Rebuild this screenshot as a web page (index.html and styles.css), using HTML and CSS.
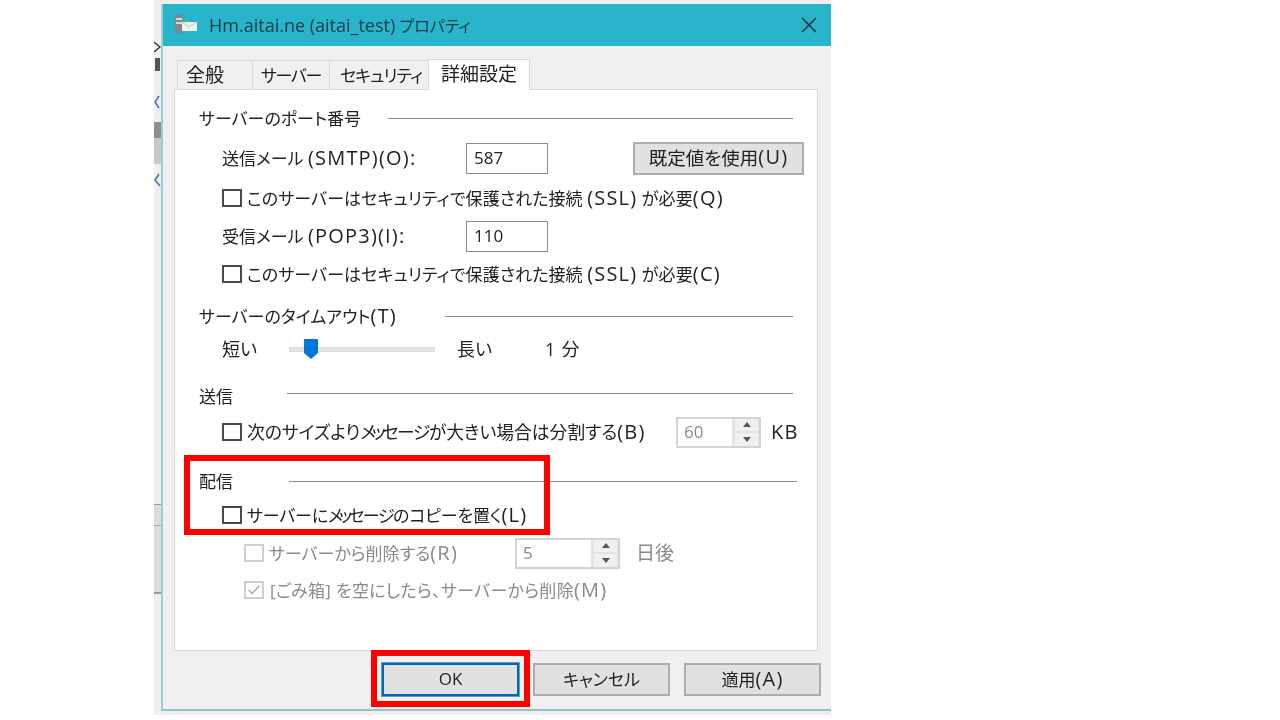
FILE: index.html
```html
<!DOCTYPE html>
<html lang="ja">
<head>
<meta charset="utf-8">
<title>Hm.aitai.ne (aitai_test) プロパティ</title>
<link rel="stylesheet" href="styles.css">
</head>
<body>
<div class="desktop">
  <div class="backdrop">
    <svg class="behind" width="7" height="716" viewBox="0 0 7 716">
      <path d="M0 42 L6 47 L0 52" fill="none" stroke="#333" stroke-width="1.4"/>
      <rect x="1" y="58" width="5" height="13" fill="#555"/>
      <path d="M5 96 L1 102 L5 108" fill="none" stroke="#3a6fc0" stroke-width="1.4"/>
      <rect y="122" width="7" height="16" fill="#8e8e8e"/>
      <rect y="138" width="7" height="26" fill="#c8c8c8"/>
      <path d="M5 174 L1 180 L6 186" fill="none" stroke="#3a6fc0" stroke-width="1.4"/>
      <rect y="504" width="7" height="88" fill="#dcdcdc"/>
      <rect y="504" width="7" height="1" fill="#999"/>
      <rect y="525" width="7" height="1" fill="#aaa"/>
      <rect y="592" width="7" height="2" fill="#999"/>
    </svg>
  </div>
  <div class="dialog">
    <div class="titlebar">
      <svg class="title-icon" width="24" height="22" viewBox="0 0 24 22">
        <rect x="1" y="1" width="8" height="18" fill="#7f8a88"/>
        <rect x="2" y="4" width="6" height="2" fill="#d2d6d4"/>
        <rect x="2" y="8" width="6" height="2" fill="#d2d6d4"/>
        <rect x="8" y="8" width="15" height="9" fill="#eef0ea"/>
        <path d="M8 8 L15 13 L23 8" fill="none" stroke="#b9c4c0"/>
      </svg>
      <span class="title-text"><span class="title-latin">Hm.aitai.ne (aitai_test)</span> プロパティ</span>
      <svg class="close-icon" width="18" height="18" viewBox="0 0 18 18">
        <path d="M2 2 L16 16 M16 2 L2 16" stroke="#16323a" stroke-width="1.5" fill="none"/>
      </svg>
    </div>
    <div class="body">
      <div class="tabs">
        <div class="tab tab-general">全般</div>
        <div class="tab tab-server">サーバー</div>
        <div class="tab tab-security">セキュリティ</div>
        <div class="tab tab-active">詳細設定</div>
      </div>
      <div class="panel">
        <div class="row heading"><span class="h-label">サーバーのポート番号</span><span class="rule gap-port"></span></div>
        <div class="row indent g10">
          <span class="field-label">送信メール <span class="latin">(SMTP)(O):</span></span>
          <span class="textbox">587</span>
          <button class="btn btn-default" type="button">既定値を使用<span class="latin">(U)</span></button>
        </div>
        <div class="row indent g10"><span class="check"></span><span class="long-label">このサーバーはセキュリティで保護された接続 <span class="latin">(SSL)</span> が必要<span class="latin">(Q)</span></span></div>
        <div class="row indent g8">
          <span class="field-label">受信メール <span class="latin">(POP3)(I):</span></span>
          <span class="textbox">110</span>
        </div>
        <div class="row indent g8"><span class="check"></span><span class="long-label">このサーバーはセキュリティで保護された接続 <span class="latin">(SSL)</span> が必要<span class="latin">(C)</span></span></div>
        <div class="row heading g12"><span class="h-label">サーバーのタイムアウト<span class="latin">(T)</span></span><span class="rule gap-time"></span></div>
        <div class="row indent g3 size18">
          <span class="slider-min">短い</span>
          <span class="slider">
            <svg class="thumb" width="14" height="20" viewBox="0 0 14 20"><path d="M0 1 Q0 0 1 0 H13 Q14 0 14 1 V14 L7 20 L0 14 Z" fill="#0078d7"/></svg>
          </span>
          <span class="slider-max">長い</span>
          <span class="minutes">1 分</span>
        </div>
        <div class="row heading g17"><span class="h-label">送信</span><span class="rule gap-send rule-up"></span></div>
        <div class="row indent g6">
          <span class="check"></span><span class="split-label">次のサイズより<span class="msg-a">メッ</span><span class="msg-b">セージ</span>が大きい場合は分割する<span class="latin">(B)</span></span>
          <span class="spin spin-kb"><span class="spin-value">60</span><span class="spin-btns"><i class="up"></i><i class="down"></i></span></span>
          <span class="unit latin">KB</span>
        </div>
        <div class="row heading g19"><span class="h-label">配信</span><span class="rule gap-deliv rule-wide"></span></div>
        <div class="row indent g4"><span class="check"></span><span class="copy-label">サーバーに<span class="msg-a">メッ</span><span class="msg-b">セージ</span>のコピーを置く<span class="latin">(L)</span></span></div>
        <div class="row indent-sub g8 disabled">
          <span class="check"></span><span class="delete-label">サーバーから削除する<span class="latin">(R)</span></span>
          <span class="spin spin-days"><span class="spin-value">5</span><span class="spin-btns"><i class="up"></i><i class="down"></i></span></span>
          <span class="unit-days">日後</span>
        </div>
        <div class="row indent-sub g7 disabled">
          <span class="check checked"><svg width="18" height="16" viewBox="0 0 18 16"><path d="M3 8 L7 12 L15 3" fill="none" stroke="#a6a6a6" stroke-width="1.6"/></svg></span>
          <span class="trash-label">[ごみ箱] を空にしたら、サーバーから削除<span class="latin">(M)</span></span>
        </div>
      </div>
      <div class="footer">
        <button class="btn btn-foot btn-ok" type="button">OK</button>
        <button class="btn btn-foot" type="button">キャンセル</button>
        <button class="btn btn-foot" type="button">適用<span class="latin">(A)</span></button>
      </div>
    </div>
  </div>
  <div class="callout callout-delivery"></div>
  <div class="callout callout-ok"></div>
</div>
</body>
</html>
```
FILE: styles.css
```css
* { box-sizing: border-box; }
html, body { margin: 0; padding: 0; background: #fff; }
body {
  width: 1280px; height: 720px; overflow: hidden;
  font-family: "Open Sans", "Noto Sans CJK JP", sans-serif;
  font-feature-settings: "palt";
  font-size: 17px; color: #222;
}
.desktop { position: relative; width: 1280px; height: 720px; overflow: hidden; }
.backdrop {
  position: absolute; left: 154px; top: 0; width: 677px; height: 715px;
  background: #efefef;
}
.behind { display: block; filter: blur(0.5px); }

.dialog {
  position: absolute; left: 161px; top: 4px; width: 670px; height: 707px;
  display: flex; flex-direction: column;
  border-left: 2px solid #9bcfd6; border-bottom: 2px solid #8fc4cb;
  filter: blur(0.35px);
}
.titlebar {
  height: 42px; background: #28b5cc; flex: none;
  display: flex; align-items: center; padding-left: 11px; padding-right: 13px;
}
.title-icon { flex: none; }
.title-text { margin-left: 11px; flex: 1; color: #1d3a44; font-size: 16px; }
.title-latin { font-size: 18px; }
.body { flex: 1; background: #f0f0f0; display: flex; flex-direction: column; padding-left: 11px; }

.latin { font-size: 20px; letter-spacing: 1.2px; }

.tabs { display: flex; height: 43px; flex: none; padding-left: 3px; align-items: flex-end; position: relative; z-index: 1; }
.tab {
  height: 29px; border: 1px solid #d9d9d9; border-bottom: 0; border-left: 0;
  display: flex; align-items: center; justify-content: center;
  background: #f0f0f0; white-space: nowrap; padding-bottom: 2px;
}
.tab-general { width: 76px; padding-right: 20px; border-left: 1px solid #d9d9d9; font-size: 19px; }
.tab-server { width: 77px; letter-spacing: -1.3px; }
.tab-security { width: 99px; letter-spacing: -1px; padding-left: 4px; }
.tab-active { width: 101px; height: 31px; background: #fff; margin-bottom: -1px; padding-bottom: 5px; font-size: 19px; }

.panel {
  width: 644px; height: 562px; flex: none;
  background: #fff; border: 1px solid #d9d9d9;
  padding-top: 13px; display: flex; flex-direction: column;
}
.row { height: 30px; flex: none; display: flex; align-items: center; white-space: nowrap; padding-bottom: 2px; }
.heading { padding-left: 24px; padding-right: 24px; }
.indent { padding-left: 47px; }
.indent-sub { padding-left: 69px; }
.g3 { margin-top: 3px; } .g4 { margin-top: 4px; } .g6 { margin-top: 6px; }
.g7 { margin-top: 7px; } .g8 { margin-top: 8px; } .g10 { margin-top: 10px; }
.g12 { margin-top: 12px; } .g17 { margin-top: 17px; } .g19 { margin-top: 19px; }
.size18 { font-size: 18px; }

.rule { flex: 1; height: 1px; background: #8e8e8e; margin-top: 2px; }
.gap-port { margin-left: 27px; }
.gap-time { margin-left: 48px; }
.gap-send { margin-left: 54px; }
.gap-deliv { margin-left: 56px; }
.rule-up { margin-bottom: 6px; }
.rule-wide { margin-right: -4px; }

.field-label { width: 244px; flex: none; }
.textbox {
  width: 82px; height: 31px; flex: none; border: 1px solid #8a8a8a; background: #fff;
  display: flex; align-items: center; padding: 0 0 2px 7px; margin-top: 2px;
}
.btn {
  font: inherit; font-feature-settings: inherit; color: #222; background: #e1e1e1; border: 2px solid #adadad;
  display: flex; align-items: center; justify-content: center; padding: 0 0 3px;
}
.btn-default { width: 171px; height: 33px; margin-left: 85px; margin-top: 2px; font-size: 18.5px; }

.check {
  width: 20px; height: 18px; flex: none; border: 2px solid #4a4a4a; background: #fff;
  margin: 2px 5px 0 0; display: flex; align-items: center; justify-content: center;
}
.disabled { color: #8a8a8a; }
.disabled .check { border: 2px solid #cfcfcf; }

.long-label { letter-spacing: .1px; }
.msg-a { letter-spacing: -4px; }
.msg-b { letter-spacing: -1.5px; }
.copy-label { letter-spacing: -.15px; }
.split-label { width: 429px; flex: none; font-size: 17.8px; }
.trash-label { margin-left: 1px; letter-spacing: .3px; }

.slider-min { width: 67px; flex: none; }
.slider { position: relative; width: 146px; height: 5px; flex: none; background: #e6e6e6; border: 1px solid #dcdcdc; margin-top: 2px; }
.thumb { position: absolute; left: 14px; top: -9px; }
.slider-max { width: 88px; flex: none; margin-left: 22px; }
.minutes { letter-spacing: .8px; }

.spin {
  height: 31px; flex: none; display: flex; border: 2px solid #d4d4d4; background: #fff; color: #8a8a8a; margin-top: 2px;
}
.spin-value { flex: 1; padding: 0 0 2px 6px; display: flex; align-items: center; }
.spin-btns { width: 27px; flex: none; display: flex; flex-direction: column; background: #e4e4e4; gap: 2px; padding: 0 1px 0 3px; }
.spin-btns i { flex: 1; display: flex; align-items: center; justify-content: center; background: #f0f0f0; }
.spin-btns .up::after { content: ""; border: 4px solid transparent; border-top: 0; border-bottom: 5px solid #555; }
.spin-btns .down::after { content: ""; border: 4px solid transparent; border-bottom: 0; border-top: 5px solid #555; }
.spin-kb { width: 85px; }
.unit { margin-left: 10px; }
.delete-label { width: 246px; flex: none; }
.spin-days { width: 105px; }
.unit-days { margin-left: 16px; font-size: 19px; }

.footer { display: flex; gap: 14px; padding-left: 208px; padding-top: 12px; }
.btn-foot { width: 137px; height: 33px; }
.btn-ok { border: 2px solid #0067b8; outline: 1px solid #5aa0d0; }

.callout { position: absolute; border: 6px solid #f00; }
.callout-delivery { left: 184px; top: 455px; width: 366px; height: 80px; }
.callout-ok { left: 371px; top: 650px; width: 159px; height: 57px; }
```
